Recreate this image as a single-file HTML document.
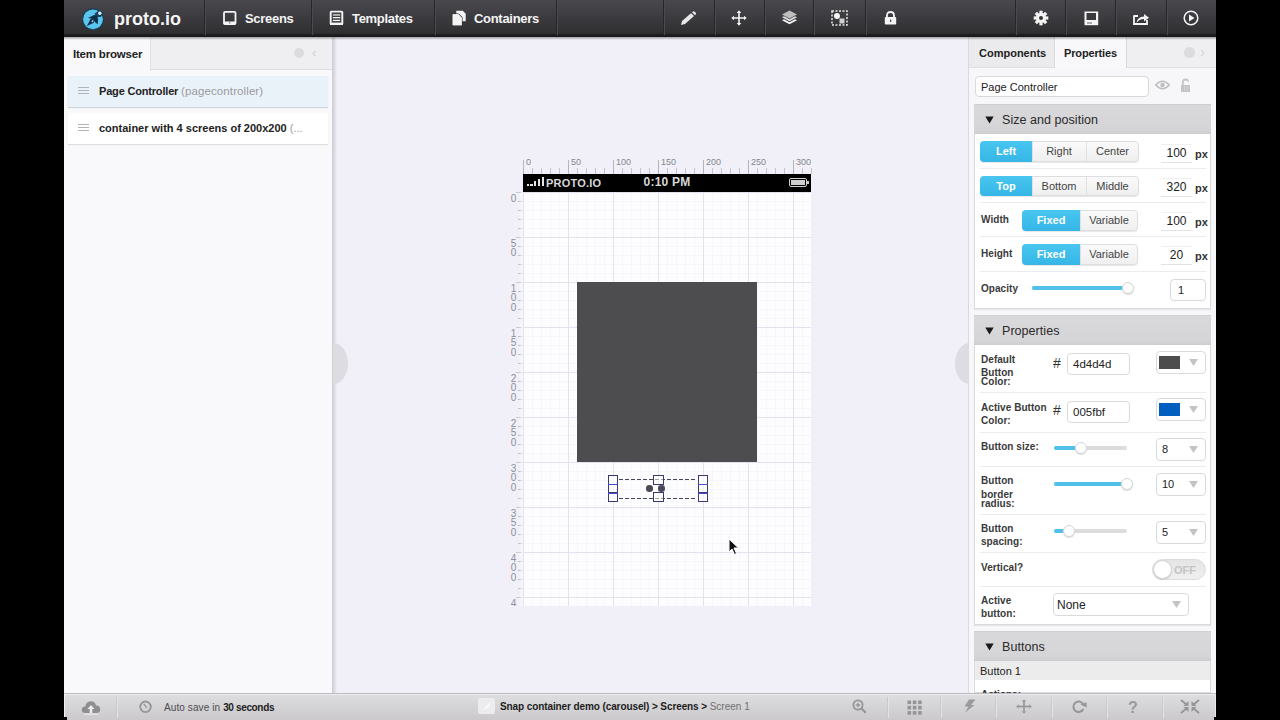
<!DOCTYPE html>
<html><head><meta charset="utf-8">
<style>
*{margin:0;padding:0;box-sizing:border-box}
html,body{width:1280px;height:720px;overflow:hidden;background:#000;font-family:"Liberation Sans",sans-serif}
.a{position:absolute}
#top{left:64px;top:0;width:1152px;height:37px;background:linear-gradient(#48484d,#3c3c40 45%,#2f2f32 90%,#1c1c1e 94%,#1a1a1c);z-index:5}
#shadow{left:64px;top:37px;width:1152px;height:3px;background:linear-gradient(rgba(40,40,45,0.4),rgba(40,40,45,0));z-index:5}
.dv{position:absolute;top:0;width:1px;height:35px;background:#27272a;box-shadow:1px 0 0 #4a4a4f}
.nt{position:absolute;top:10.5px;color:#f4f4f4;font-size:13px;line-height:16px;font-weight:bold;letter-spacing:-0.3px;white-space:nowrap}
#left{left:64px;top:36px;width:269px;height:657px;background:#f9f9fb}
#canvas{left:333px;top:36px;width:636px;height:657px;background:#f1f0f8;overflow:hidden}
#right{left:969px;top:36px;width:247px;height:657px;background:#f6f6f7}
#bottom{left:64px;top:693px;width:1152px;height:27px;background:linear-gradient(#dddddd,#cdcdcd);border-top:1px solid #c6c6c6}
.bd{position:absolute;top:4px;width:1px;height:20px;background:#c0c0c0;box-shadow:1px 0 0 #e4e4e4}
.t{position:absolute;white-space:nowrap}
</style></head><body>

<!-- top bar -->
<div id="top" class="a">
  <svg class="a" style="left:17px;top:7px" width="24" height="24" viewBox="0 0 24 24">
    <circle cx="12" cy="12.3" r="11" fill="#1a3d55"/>
    <circle cx="12" cy="12.3" r="9.9" fill="#5ac6f0"/>
    <path d="M7 11 L13 8 L19 8.5 L14 12.2 Z" fill="#0f2f4a"/>
    <path d="M5.8 19.2 L9.3 12.5 L13.5 9.3 L16.8 10.5 L12.6 15.8 Z" fill="#0f2f4a"/>
    <path d="M14 12 L17.2 11 L16.6 17.2 L14 15.2 Z" fill="#0f2f4a"/>
    <path d="M13.5 6.8 L18 3.2 L23 5.8 L19.5 10.2 L15 9.2 Z" fill="#1a3f5c"/>
    <circle cx="18.8" cy="6.2" r="1.7" fill="#d8eef8"/>
    <path d="M10.3 14.8 L12.3 12.3 L12.2 15.2 Z" fill="#a8dcef"/>
  </svg>
  <div class="nt" style="left:50px;top:7.5px;font-size:18px;line-height:22px;letter-spacing:0">proto.io</div>
  <div class="dv" style="left:140px"></div>
  <!-- screens icon -->
  <svg class="a" style="left:159px;top:11px" width="14" height="14" viewBox="0 0 14 14">
    <rect x="1" y="0.9" width="11.5" height="12.2" rx="1.2" fill="none" stroke="#f4f4f4" stroke-width="1.8"/>
    <rect x="0.5" y="10.6" width="12.5" height="3" rx="1" fill="#f4f4f4"/>
    <circle cx="6.75" cy="11.9" r="0.7" fill="#555"/>
  </svg>
  <div class="nt" style="left:181px">Screens</div>
  <div class="dv" style="left:247px"></div>
  <!-- templates icon -->
  <svg class="a" style="left:265px;top:10px" width="15" height="16" viewBox="0 0 15 16">
    <rect x="1.7" y="1.6" width="11.6" height="12.4" rx="0.6" fill="none" stroke="#f4f4f4" stroke-width="1.9"/>
    <rect x="1" y="12.6" width="13" height="2.4" fill="#f4f4f4"/>
    <rect x="3.8" y="4.3" width="7.4" height="1.3" fill="#e8e8e8"/>
    <rect x="3.8" y="7" width="7.4" height="1.3" fill="#f4f4f4"/>
    <rect x="3.8" y="9.8" width="7.4" height="1.3" fill="#f4f4f4"/>
  </svg>
  <div class="nt" style="left:288px">Templates</div>
  <div class="dv" style="left:370px"></div>
  <!-- containers icon -->
  <svg class="a" style="left:387px;top:10px" width="17" height="17" viewBox="0 0 17 17">
    <path d="M5.3 0.8 H11.8 L14.7 3.7 V11.3 H5.3 Z" fill="#f4f4f4"/>
    <path d="M1.7 4.3 H7.3 L10.7 7.7 V15.3 H1.7 Z" fill="#f4f4f4" stroke="#2e2e31" stroke-width="1.6" paint-order="stroke"/>
    <path d="M1.7 4.3 H7.3 L10.7 7.7 V15.3 H1.7 Z" fill="#f4f4f4"/>
  </svg>
  <div class="nt" style="left:410px">Containers</div>
  <div class="dv" style="left:492px"></div>
  <div class="dv" style="left:599px"></div>
  <!-- pencil -->
  <svg class="a" style="left:616px;top:11px" width="17" height="15" viewBox="0 0 17 15">
    <path d="M1 14 L2 10 L11 2.2 L14 5 L5 13 Z" fill="#e8e8e8"/>
    <path d="M12 1.3 L13 0.5 Q14 0 15 1 L15.7 1.7 Q16.5 2.7 15.7 3.5 L15 4.2 Z" fill="#e8e8e8"/>
  </svg>
  <div class="dv" style="left:650px"></div>
  <!-- move -->
  <svg class="a" style="left:667px;top:10px" width="16" height="16" viewBox="0 0 16 16">
    <path d="M7.2 2.5 H8.8 V7.2 H13.5 V8.8 H8.8 V13.5 H7.2 V8.8 H2.5 V7.2 H7.2 Z" fill="#f4f4f4"/>
    <path d="M8 0.3 L10.3 3 H5.7 Z M8 15.7 L10.3 13 H5.7 Z M0.3 8 L3 5.7 V10.3 Z M15.7 8 L13 5.7 V10.3 Z" fill="#f4f4f4"/>
  </svg>
  <div class="dv" style="left:700px"></div>
  <!-- layers -->
  <svg class="a" style="left:717px;top:10px" width="17" height="15" viewBox="0 0 17 15">
    <path d="M8.5 0.5 L16 4.5 L8.5 8.5 L1 4.5 Z" fill="#bdbdbd"/>
    <path d="M1 7.3 L3 6.3 L8.5 9.3 L14 6.3 L16 7.3 L8.5 11.3 Z" fill="#e0e0e0"/>
    <path d="M1 10.3 L3 9.3 L8.5 12.3 L14 9.3 L16 10.3 L8.5 14.3 Z" fill="#f4f4f4"/>
  </svg>
  <div class="dv" style="left:749px"></div>
  <!-- select -->
  <svg class="a" style="left:767px;top:10px" width="17" height="16" viewBox="0 0 17 16">
    <rect x="1" y="1" width="15" height="14" fill="none" stroke="#e6e6e6" stroke-width="1.5" stroke-dasharray="2 1.5"/>
    <circle cx="6" cy="6" r="3" fill="#f4f4f4"/>
    <rect x="8.5" y="8.5" width="5" height="5" fill="#cfcfcf"/>
  </svg>
  <div class="dv" style="left:801px"></div>
  <!-- lock -->
  <svg class="a" style="left:820px;top:11px" width="13" height="14" viewBox="0 0 13 14">
    <path d="M3 6 V4.5 Q3 1 6.5 1 Q10 1 10 4.5 V6" fill="none" stroke="#f4f4f4" stroke-width="1.8"/>
    <rect x="0.8" y="6" width="11.4" height="7.5" rx="0.8" fill="#f4f4f4"/>
    <rect x="6" y="8.5" width="1.2" height="2.5" fill="#444"/>
  </svg>
  <div class="dv" style="left:951px"></div>
  <!-- gear -->
  <svg class="a" style="left:969px;top:10px" width="16" height="16" viewBox="0 0 16 16">
    <g fill="#f4f4f4" transform="translate(8 8)">
      <circle r="5"/>
      <rect x="-1.6" y="-7.3" width="3.2" height="14.6"/>
      <rect x="-1.6" y="-7.3" width="3.2" height="14.6" transform="rotate(45)"/>
      <rect x="-1.6" y="-7.3" width="3.2" height="14.6" transform="rotate(90)"/>
      <rect x="-1.6" y="-7.3" width="3.2" height="14.6" transform="rotate(135)"/>
      <circle r="2" fill="#333"/>
    </g>
  </svg>
  <div class="dv" style="left:1001px"></div>
  <!-- save -->
  <svg class="a" style="left:1020px;top:11px" width="15" height="15" viewBox="0 0 15 15">
    <path d="M0.5 0.5 H14.2 V14.2 H0.5 Z" fill="#f4f4f4"/>
    <rect x="2.5" y="2" width="9.5" height="7" fill="#3a3a3d"/>
    <rect x="3" y="11" width="5" height="2" fill="#aaa"/>
  </svg>
  <div class="dv" style="left:1051px"></div>
  <!-- share -->
  <svg class="a" style="left:1069px;top:11px" width="17" height="14" viewBox="0 0 17 14">
    <path d="M1 5 H5 M1 4.2 V13 H14 V9" fill="none" stroke="#f4f4f4" stroke-width="1.8"/>
    <path d="M3.5 12 Q4 6 11 5.5 V3 L16 6.8 L11 10.5 V8 Q6 8 3.5 12 Z" fill="#f4f4f4"/>
  </svg>
  <div class="dv" style="left:1102px"></div>
  <!-- play -->
  <svg class="a" style="left:1119px;top:10px" width="16" height="16" viewBox="0 0 16 16">
    <circle cx="8" cy="8" r="6.8" fill="none" stroke="#f4f4f4" stroke-width="1.5"/>
    <path d="M6 4.5 L11.5 8 L6 11.5 Z" fill="#f4f4f4"/>
  </svg>
</div>

<div id="shadow" class="a"></div>
<!-- left panel -->
<div id="left" class="a">
  <div class="a" style="left:0;top:0;width:269px;height:34px;background:#efeef0;border-bottom:1px solid #dcdcde"></div>
  <div class="a" style="left:0;top:0;width:87px;height:35px;background:#f8f8fa;border-right:1px solid #e2e2e4"></div>
  
  <div class="t" style="left:9px;top:11px;font-size:11.5px;line-height:14px;font-weight:bold;color:#222;letter-spacing:-0.2px">Item browser</div>
  <div class="a" style="left:230px;top:12px;width:10px;height:10px;border-radius:50%;background:#dcdcde"></div>
  <div class="t" style="left:248px;top:9px;font-size:13px;color:#d0d0d2">&lsaquo;</div>

  <div class="a" style="left:4px;top:40px;width:260px;height:31px;background:#eaf2f9;box-shadow:0 1px 1px #d0d5db"></div>
  <div class="a" style="left:14px;top:50.5px;width:11px;height:1.8px;background:#b4b4b8;box-shadow:0 3px 0 #b4b4b8,0 6px 0 #b4b4b8"></div>
  <div class="t" style="left:35px;top:49px;font-size:11px;line-height:13px;font-weight:bold;color:#222;letter-spacing:-0.18px">Page Controller <span style="font-weight:normal;color:#9a9a9e;font-size:11.5px;letter-spacing:0.1px">(pagecontroller)</span></div>

  <div class="a" style="left:4px;top:77px;width:260px;height:31px;background:#fff;box-shadow:0 1px 1px #dedede"></div>
  <div class="a" style="left:14px;top:87.5px;width:11px;height:1.8px;background:#b4b4b8;box-shadow:0 3px 0 #b4b4b8,0 6px 0 #b4b4b8"></div>
  <div class="t" style="left:35px;top:86px;font-size:11px;font-weight:bold;color:#222">container with 4 screens of 200x200 <span style="font-weight:normal;color:#9a9a9e">(...</span></div>
  <div class="a" style="left:268px;top:0;width:1px;height:657px;background:#cfcfd4"></div>
</div>

<div id="canvas" class="a">
<div class="a" style="left:190px;top:156px;width:288px;height:414px;background:#fdfdff;background-image:linear-gradient(90deg,#e3e3ef 1px,transparent 1px),linear-gradient(#e3e3ef 1px,transparent 1px),linear-gradient(90deg,#f7f7fa 1px,transparent 1px),linear-gradient(#f7f7fa 1px,transparent 1px);background-size:45px 45px,45px 45px,9px 9px,9px 9px;background-position:0 0,0 0,0 0,0 0"></div>
<div class="a" style="left:190px;top:138px;width:288px;height:18px;background:#000"></div>
<div class="a" style="left:193.7px;top:148.2px;width:2.3px;height:1.8px;background:#e4e4e4"></div>
<div class="a" style="left:197.4px;top:147.5px;width:2.3px;height:2.5px;background:#e4e4e4"></div>
<div class="a" style="left:201.1px;top:145.3px;width:2.3px;height:4.7px;background:#e4e4e4"></div>
<div class="a" style="left:204.8px;top:143.2px;width:2.3px;height:6.8px;background:#e4e4e4"></div>
<div class="a" style="left:208.5px;top:141.1px;width:2.3px;height:8.9px;background:#e4e4e4"></div>
<div class="t" style="left:213px;top:139.5px;font-size:11px;line-height:14px;color:#d8d8d8;font-weight:bold;letter-spacing:0.2px">PROTO.IO</div>
<div class="t" style="left:310.5px;top:139px;font-size:12px;line-height:14px;color:#d8d8d8;font-weight:bold;letter-spacing:0.25px">0:10 PM</div>
<div class="a" style="left:456px;top:142px;width:18px;height:9px;border:1.2px solid #cfcfcf;border-radius:2px"></div>
<div class="a" style="left:458px;top:144px;width:14px;height:5px;background:#cfcfcf"></div>
<div class="a" style="left:474px;top:145px;width:2px;height:3px;background:#cfcfcf"></div>
<div class="a" style="left:190px;top:124px;width:1px;height:14px;background:#b4b4be"></div>
<div class="a" style="left:199px;top:132px;width:1px;height:6px;background:#c4c4cc"></div>
<div class="a" style="left:208px;top:132px;width:1px;height:6px;background:#c4c4cc"></div>
<div class="a" style="left:217px;top:132px;width:1px;height:6px;background:#c4c4cc"></div>
<div class="a" style="left:226px;top:132px;width:1px;height:6px;background:#c4c4cc"></div>
<div class="a" style="left:235px;top:124px;width:1px;height:14px;background:#b4b4be"></div>
<div class="a" style="left:244px;top:132px;width:1px;height:6px;background:#c4c4cc"></div>
<div class="a" style="left:253px;top:132px;width:1px;height:6px;background:#c4c4cc"></div>
<div class="a" style="left:262px;top:132px;width:1px;height:6px;background:#c4c4cc"></div>
<div class="a" style="left:271px;top:132px;width:1px;height:6px;background:#c4c4cc"></div>
<div class="a" style="left:280px;top:124px;width:1px;height:14px;background:#b4b4be"></div>
<div class="a" style="left:289px;top:132px;width:1px;height:6px;background:#c4c4cc"></div>
<div class="a" style="left:298px;top:132px;width:1px;height:6px;background:#c4c4cc"></div>
<div class="a" style="left:307px;top:132px;width:1px;height:6px;background:#c4c4cc"></div>
<div class="a" style="left:316px;top:132px;width:1px;height:6px;background:#c4c4cc"></div>
<div class="a" style="left:325px;top:124px;width:1px;height:14px;background:#b4b4be"></div>
<div class="a" style="left:334px;top:132px;width:1px;height:6px;background:#c4c4cc"></div>
<div class="a" style="left:343px;top:132px;width:1px;height:6px;background:#c4c4cc"></div>
<div class="a" style="left:352px;top:132px;width:1px;height:6px;background:#c4c4cc"></div>
<div class="a" style="left:361px;top:132px;width:1px;height:6px;background:#c4c4cc"></div>
<div class="a" style="left:370px;top:124px;width:1px;height:14px;background:#b4b4be"></div>
<div class="a" style="left:379px;top:132px;width:1px;height:6px;background:#c4c4cc"></div>
<div class="a" style="left:388px;top:132px;width:1px;height:6px;background:#c4c4cc"></div>
<div class="a" style="left:397px;top:132px;width:1px;height:6px;background:#c4c4cc"></div>
<div class="a" style="left:406px;top:132px;width:1px;height:6px;background:#c4c4cc"></div>
<div class="a" style="left:415px;top:124px;width:1px;height:14px;background:#b4b4be"></div>
<div class="a" style="left:424px;top:132px;width:1px;height:6px;background:#c4c4cc"></div>
<div class="a" style="left:433px;top:132px;width:1px;height:6px;background:#c4c4cc"></div>
<div class="a" style="left:442px;top:132px;width:1px;height:6px;background:#c4c4cc"></div>
<div class="a" style="left:451px;top:132px;width:1px;height:6px;background:#c4c4cc"></div>
<div class="a" style="left:460px;top:124px;width:1px;height:14px;background:#b4b4be"></div>
<div class="a" style="left:469px;top:132px;width:1px;height:6px;background:#c4c4cc"></div>
<div class="a" style="left:478px;top:132px;width:1px;height:6px;background:#c4c4cc"></div>
<div class="t" style="left:193px;top:121px;font-size:9px;line-height:10px;color:#85858d">0</div>
<div class="t" style="left:238px;top:121px;font-size:9px;line-height:10px;color:#85858d">50</div>
<div class="t" style="left:283px;top:121px;font-size:9px;line-height:10px;color:#85858d">100</div>
<div class="t" style="left:328px;top:121px;font-size:9px;line-height:10px;color:#85858d">150</div>
<div class="t" style="left:373px;top:121px;font-size:9px;line-height:10px;color:#85858d">200</div>
<div class="t" style="left:418px;top:121px;font-size:9px;line-height:10px;color:#85858d">250</div>
<div class="t" style="left:463px;top:121px;font-size:9px;line-height:10px;color:#85858d">300</div>
<div class="a" style="left:170px;top:156px;width:20px;height:414px;overflow:hidden"><div class="a" style="left:13px;top:0px;width:7px;height:1px;background:#c8c8d0"></div><div class="a" style="left:15px;top:9px;width:5px;height:1px;background:#bcbcc6"></div><div class="a" style="left:15px;top:18px;width:5px;height:1px;background:#bcbcc6"></div><div class="a" style="left:15px;top:27px;width:5px;height:1px;background:#bcbcc6"></div><div class="a" style="left:15px;top:36px;width:5px;height:1px;background:#bcbcc6"></div><div class="a" style="left:13px;top:45px;width:7px;height:1px;background:#c8c8d0"></div><div class="a" style="left:15px;top:54px;width:5px;height:1px;background:#bcbcc6"></div><div class="a" style="left:15px;top:63px;width:5px;height:1px;background:#bcbcc6"></div><div class="a" style="left:15px;top:72px;width:5px;height:1px;background:#bcbcc6"></div><div class="a" style="left:15px;top:81px;width:5px;height:1px;background:#bcbcc6"></div><div class="a" style="left:13px;top:90px;width:7px;height:1px;background:#c8c8d0"></div><div class="a" style="left:15px;top:99px;width:5px;height:1px;background:#bcbcc6"></div><div class="a" style="left:15px;top:108px;width:5px;height:1px;background:#bcbcc6"></div><div class="a" style="left:15px;top:117px;width:5px;height:1px;background:#bcbcc6"></div><div class="a" style="left:15px;top:126px;width:5px;height:1px;background:#bcbcc6"></div><div class="a" style="left:13px;top:135px;width:7px;height:1px;background:#c8c8d0"></div><div class="a" style="left:15px;top:144px;width:5px;height:1px;background:#bcbcc6"></div><div class="a" style="left:15px;top:153px;width:5px;height:1px;background:#bcbcc6"></div><div class="a" style="left:15px;top:162px;width:5px;height:1px;background:#bcbcc6"></div><div class="a" style="left:15px;top:171px;width:5px;height:1px;background:#bcbcc6"></div><div class="a" style="left:13px;top:180px;width:7px;height:1px;background:#c8c8d0"></div><div class="a" style="left:15px;top:189px;width:5px;height:1px;background:#bcbcc6"></div><div class="a" style="left:15px;top:198px;width:5px;height:1px;background:#bcbcc6"></div><div class="a" style="left:15px;top:207px;width:5px;height:1px;background:#bcbcc6"></div><div class="a" style="left:15px;top:216px;width:5px;height:1px;background:#bcbcc6"></div><div class="a" style="left:13px;top:225px;width:7px;height:1px;background:#c8c8d0"></div><div class="a" style="left:15px;top:234px;width:5px;height:1px;background:#bcbcc6"></div><div class="a" style="left:15px;top:243px;width:5px;height:1px;background:#bcbcc6"></div><div class="a" style="left:15px;top:252px;width:5px;height:1px;background:#bcbcc6"></div><div class="a" style="left:15px;top:261px;width:5px;height:1px;background:#bcbcc6"></div><div class="a" style="left:13px;top:270px;width:7px;height:1px;background:#c8c8d0"></div><div class="a" style="left:15px;top:279px;width:5px;height:1px;background:#bcbcc6"></div><div class="a" style="left:15px;top:288px;width:5px;height:1px;background:#bcbcc6"></div><div class="a" style="left:15px;top:297px;width:5px;height:1px;background:#bcbcc6"></div><div class="a" style="left:15px;top:306px;width:5px;height:1px;background:#bcbcc6"></div><div class="a" style="left:13px;top:315px;width:7px;height:1px;background:#c8c8d0"></div><div class="a" style="left:15px;top:324px;width:5px;height:1px;background:#bcbcc6"></div><div class="a" style="left:15px;top:333px;width:5px;height:1px;background:#bcbcc6"></div><div class="a" style="left:15px;top:342px;width:5px;height:1px;background:#bcbcc6"></div><div class="a" style="left:15px;top:351px;width:5px;height:1px;background:#bcbcc6"></div><div class="a" style="left:13px;top:360px;width:7px;height:1px;background:#c8c8d0"></div><div class="a" style="left:15px;top:369px;width:5px;height:1px;background:#bcbcc6"></div><div class="a" style="left:15px;top:378px;width:5px;height:1px;background:#bcbcc6"></div><div class="a" style="left:15px;top:387px;width:5px;height:1px;background:#bcbcc6"></div><div class="a" style="left:15px;top:396px;width:5px;height:1px;background:#bcbcc6"></div><div class="a" style="left:13px;top:405px;width:7px;height:1px;background:#c8c8d0"></div><div class="a" style="left:15px;top:414px;width:5px;height:1px;background:#bcbcc6"></div><div class="t" style="left:6px;top:2px;font-size:10px;line-height:9.3px;color:#8e8e96;text-align:center;width:9px;white-space:normal">0</div><div class="t" style="left:6px;top:47px;font-size:10px;line-height:9.3px;color:#8e8e96;text-align:center;width:9px;white-space:normal">5<br>0</div><div class="t" style="left:6px;top:92px;font-size:10px;line-height:9.3px;color:#8e8e96;text-align:center;width:9px;white-space:normal">1<br>0<br>0</div><div class="t" style="left:6px;top:137px;font-size:10px;line-height:9.3px;color:#8e8e96;text-align:center;width:9px;white-space:normal">1<br>5<br>0</div><div class="t" style="left:6px;top:182px;font-size:10px;line-height:9.3px;color:#8e8e96;text-align:center;width:9px;white-space:normal">2<br>0<br>0</div><div class="t" style="left:6px;top:227px;font-size:10px;line-height:9.3px;color:#8e8e96;text-align:center;width:9px;white-space:normal">2<br>5<br>0</div><div class="t" style="left:6px;top:272px;font-size:10px;line-height:9.3px;color:#8e8e96;text-align:center;width:9px;white-space:normal">3<br>0<br>0</div><div class="t" style="left:6px;top:317px;font-size:10px;line-height:9.3px;color:#8e8e96;text-align:center;width:9px;white-space:normal">3<br>5<br>0</div><div class="t" style="left:6px;top:362px;font-size:10px;line-height:9.3px;color:#8e8e96;text-align:center;width:9px;white-space:normal">4<br>0<br>0</div><div class="t" style="left:6px;top:407px;font-size:10px;line-height:9.3px;color:#8e8e96;text-align:center;width:9px;white-space:normal">4<br>5<br>0</div><div class="a" style="left:16px;top:0;width:4px;height:414px;background:linear-gradient(90deg,rgba(255,255,255,0),rgba(250,250,253,0.9))"></div></div>
<div class="a" style="left:244px;top:246px;width:180px;height:180px;background:#4d4c4e"></div>
<div class="a" style="left:286px;top:443px;width:78px;height:1.2px;background:repeating-linear-gradient(90deg,#45455a 0 4px,transparent 4px 6px)"></div>
<div class="a" style="left:286px;top:462px;width:78px;height:1.2px;background:repeating-linear-gradient(90deg,#45455a 0 4px,transparent 4px 6px)"></div>
<div class="a" style="left:275.29999999999995px;top:439px;width:10px;height:9.5px;border:1.1px solid #3a3a72;background:rgba(255,255,255,0.5)"></div>
<div class="a" style="left:275.29999999999995px;top:447.8px;width:10px;height:9.3px;border:1.1px solid #3a3a72;background:rgba(255,255,255,0.5)"></div>
<div class="a" style="left:275.29999999999995px;top:456.3px;width:10px;height:9.3px;border:1.1px solid #3a3a72;background:rgba(255,255,255,0.5)"></div>
<div class="a" style="left:275.29999999999995px;top:448px;width:10px;height:1px;background:#4a4ad0"></div>
<div class="a" style="left:275.29999999999995px;top:456.5px;width:10px;height:1px;background:#4a4ad0"></div>
<div class="a" style="left:364.5px;top:439px;width:10px;height:9.5px;border:1.1px solid #3a3a72;background:rgba(255,255,255,0.5)"></div>
<div class="a" style="left:364.5px;top:447.8px;width:10px;height:9.3px;border:1.1px solid #3a3a72;background:rgba(255,255,255,0.5)"></div>
<div class="a" style="left:364.5px;top:456.3px;width:10px;height:9.3px;border:1.1px solid #3a3a72;background:rgba(255,255,255,0.5)"></div>
<div class="a" style="left:364.5px;top:448px;width:10px;height:1px;background:#4a4ad0"></div>
<div class="a" style="left:364.5px;top:456.5px;width:10px;height:1px;background:#4a4ad0"></div>
<div class="a" style="left:313.4px;top:449.2px;width:6.6px;height:6.6px;border-radius:50%;background:#4a4a50"></div>
<div class="a" style="left:325px;top:449.2px;width:6.6px;height:6.6px;border-radius:50%;background:#4a4a5a"></div>
<div class="a" style="left:320.4px;top:439px;width:11px;height:10.2px;border:1.1px solid #3a3a72;background:rgba(255,255,255,0.5)"></div>
<div class="a" style="left:320.4px;top:455.7px;width:11px;height:9.9px;border:1.1px solid #3a3a72;background:rgba(255,255,255,0.5)"></div>
<svg class="a" style="left:395px;top:502px" width="12" height="18" viewBox="0 0 12 18"><path d="M1 1 L1 14 L4 11 L6.5 16.5 L8.5 15.5 L6 10 L10.5 10 Z" fill="#111" stroke="#fff" stroke-width="1"/></svg>
<div class="a" style="left:0;top:0;width:4px;height:657px;background:linear-gradient(90deg,rgba(150,150,160,0.35),rgba(150,150,160,0))"></div>
<div class="a" style="left:-14px;top:307px;width:29px;height:41px;border-radius:50%;background:#dcdce2"></div>
<div class="a" style="left:622px;top:307px;width:29px;height:41px;border-radius:50%;background:#dcdce2"></div>
</div>
<div id="rightp">
<div class="a" style="left:969px;top:36px;width:247px;height:657px;background:#f7f7f9"></div>
<div class="a" style="left:968px;top:36px;width:1px;height:657px;background:#d9d9de"></div>
<div class="a" style="left:969px;top:36px;width:247px;height:32px;background:#efeff1;border-bottom:1px solid #dedee0"></div>
<div class="a" style="left:969px;top:36px;width:86px;height:32px;background:#ebebed;border-right:1px solid #dadadc;border-bottom:1px solid #dedee0"></div>
<div class="a" style="left:1055px;top:36px;width:72px;height:32px;background:#f8f8fa;border-right:1px solid #dadadc"></div>
<div class="t" style="left:979px;top:46px;font-size:11px;line-height:14px;font-weight:bold;color:#222">Components</div>
<div class="t" style="left:1064px;top:46px;font-size:11px;line-height:14px;font-weight:bold;color:#222;letter-spacing:-0.15px">Properties</div>
<div class="a" style="left:1184px;top:47px;width:11px;height:11px;border-radius:50%;background:#dcdcde"></div>
<div class="t" style="left:1200px;top:43px;font-size:15px;line-height:18px;color:#d4d4d6">&rsaquo;</div>
<div class="a" style="left:975px;top:76px;width:174px;height:21px;background:#fff;border:1px solid #d9d9db;border-radius:4px"></div>
<div class="t" style="left:981px;top:80px;font-size:11px;line-height:14px;color:#222">Page Controller</div>
<svg class="a" style="left:1155px;top:80px" width="15" height="10" viewBox="0 0 15 10"><path d="M0.8 5 Q7.5 -2.5 14.2 5 Q7.5 12.5 0.8 5 Z" fill="none" stroke="#bdbdbf" stroke-width="1.6"/><circle cx="7.5" cy="5" r="2.2" fill="#bdbdbf"/></svg>
<svg class="a" style="left:1180px;top:78px" width="11" height="15" viewBox="0 0 11 15"><path d="M2.8 7 V4 Q2.8 1.5 5.5 1.5 Q8 1.5 8 3.5" fill="none" stroke="#c4c4c6" stroke-width="1.8"/><rect x="1" y="7" width="9" height="7" rx="0.6" fill="#c4c4c6"/><rect x="4" y="8" width="0.8" height="5" fill="#dadadc"/><rect x="6.6" y="8" width="0.8" height="5" fill="#dadadc"/></svg>
<div class="a" style="left:974px;top:104px;width:237px;height:30px;background:linear-gradient(#d9d8da,#d5d4d6 85%,#cdcccf);border-top:1px solid #d0d0d2"></div>
<svg class="a" style="left:985px;top:116px" width="9" height="8" viewBox="0 0 9 8"><path d="M0.3 0.5 H8.7 L4.5 7.5 Z" fill="#1a1a1a"/></svg>
<div class="t" style="left:1002px;top:113.3px;font-size:12.5px;line-height:15px;color:#2a2a2a;letter-spacing:0.05px">Size and position</div>
<div class="a" style="left:974px;top:134px;width:237px;height:175px;background:#fff;border:1px solid #dcdcde;border-top:none;box-shadow:0 1px 1px #e4e4e6"></div>
<div class="a" style="left:980px;top:141px;width:159px;height:21px;background:linear-gradient(#fafafa,#efefef);border:1px solid #dedede;border-radius:4px;box-shadow:0 1px 1px #e6e6e6"></div>
<div class="a" style="left:980px;top:141px;width:52px;height:21px;background:linear-gradient(#49c6f0,#35b6e6);border-radius:4px 0 0 4px"></div>
<div class="t" style="left:980px;top:141px;width:52px;height:21px;line-height:21px;text-align:center;font-size:11px;font-weight:bold;color:#fff">Left</div>
<div class="a" style="left:1032px;top:142px;width:1px;height:19px;background:#e0e0e0"></div>
<div class="t" style="left:1032px;top:141px;width:54px;height:21px;line-height:21px;text-align:center;font-size:11px;color:#444">Right</div>
<div class="a" style="left:1086px;top:142px;width:1px;height:19px;background:#e0e0e0"></div>
<div class="t" style="left:1086px;top:141px;width:53px;height:21px;line-height:21px;text-align:center;font-size:11px;color:#444">Center</div>
<div class="a" style="left:1161px;top:144px;width:31px;height:19px;background:#fff;border-top:1px solid #f0f0f0;border-bottom:1px solid #e2e2e2"></div>
<div class="t" style="left:1161px;top:146px;width:31px;text-align:center;font-size:12px;line-height:14px;color:#222">100</div>
<div class="t" style="left:1195px;top:146.5px;font-size:11px;line-height:14px;font-weight:bold;color:#333">px</div>
<div class="a" style="left:980px;top:168px;width:226px;height:1px;background:#ececee"></div>
<div class="a" style="left:980px;top:176px;width:159px;height:20px;background:linear-gradient(#fafafa,#efefef);border:1px solid #dedede;border-radius:4px;box-shadow:0 1px 1px #e6e6e6"></div>
<div class="a" style="left:980px;top:176px;width:52px;height:20px;background:linear-gradient(#49c6f0,#35b6e6);border-radius:4px 0 0 4px"></div>
<div class="t" style="left:980px;top:176px;width:52px;height:20px;line-height:20px;text-align:center;font-size:11px;font-weight:bold;color:#fff">Top</div>
<div class="a" style="left:1032px;top:177px;width:1px;height:18px;background:#e0e0e0"></div>
<div class="t" style="left:1032px;top:176px;width:54px;height:20px;line-height:20px;text-align:center;font-size:11px;color:#444">Bottom</div>
<div class="a" style="left:1086px;top:177px;width:1px;height:18px;background:#e0e0e0"></div>
<div class="t" style="left:1086px;top:176px;width:53px;height:20px;line-height:20px;text-align:center;font-size:11px;color:#444">Middle</div>
<div class="a" style="left:1161px;top:178px;width:31px;height:19px;background:#fff;border-top:1px solid #f0f0f0;border-bottom:1px solid #e2e2e2"></div>
<div class="t" style="left:1161px;top:180px;width:31px;text-align:center;font-size:12px;line-height:14px;color:#222">320</div>
<div class="t" style="left:1195px;top:180.5px;font-size:11px;line-height:14px;font-weight:bold;color:#333">px</div>
<div class="a" style="left:980px;top:202px;width:226px;height:1px;background:#ececee"></div>
<div class="t" style="left:981px;top:213px;font-size:10px;line-height:13px;font-weight:bold;color:#3a3a3a;letter-spacing:0.05px">Width</div>
<div class="a" style="left:1022px;top:210px;width:116px;height:21px;background:linear-gradient(#fafafa,#efefef);border:1px solid #dedede;border-radius:4px;box-shadow:0 1px 1px #e6e6e6"></div>
<div class="a" style="left:1022px;top:210px;width:58px;height:21px;background:linear-gradient(#49c6f0,#35b6e6);border-radius:4px 0 0 4px"></div>
<div class="t" style="left:1022px;top:210px;width:58px;height:21px;line-height:21px;text-align:center;font-size:11px;font-weight:bold;color:#fff">Fixed</div>
<div class="a" style="left:1080px;top:211px;width:1px;height:19px;background:#e0e0e0"></div>
<div class="t" style="left:1080px;top:210px;width:58px;height:21px;line-height:21px;text-align:center;font-size:11px;color:#444">Variable</div>
<div class="a" style="left:1161px;top:212px;width:31px;height:19px;background:#fff;border-top:1px solid #f0f0f0;border-bottom:1px solid #e2e2e2"></div>
<div class="t" style="left:1161px;top:214px;width:31px;text-align:center;font-size:12px;line-height:14px;color:#222">100</div>
<div class="t" style="left:1195px;top:214.5px;font-size:11px;line-height:14px;font-weight:bold;color:#333">px</div>
<div class="a" style="left:980px;top:236px;width:226px;height:1px;background:#ececee"></div>
<div class="t" style="left:981px;top:247px;font-size:10px;line-height:13px;font-weight:bold;color:#3a3a3a;letter-spacing:0.05px">Height</div>
<div class="a" style="left:1022px;top:244px;width:116px;height:21px;background:linear-gradient(#fafafa,#efefef);border:1px solid #dedede;border-radius:4px;box-shadow:0 1px 1px #e6e6e6"></div>
<div class="a" style="left:1022px;top:244px;width:58px;height:21px;background:linear-gradient(#49c6f0,#35b6e6);border-radius:4px 0 0 4px"></div>
<div class="t" style="left:1022px;top:244px;width:58px;height:21px;line-height:21px;text-align:center;font-size:11px;font-weight:bold;color:#fff">Fixed</div>
<div class="a" style="left:1080px;top:245px;width:1px;height:19px;background:#e0e0e0"></div>
<div class="t" style="left:1080px;top:244px;width:58px;height:21px;line-height:21px;text-align:center;font-size:11px;color:#444">Variable</div>
<div class="a" style="left:1161px;top:246px;width:31px;height:19px;background:#fff;border-top:1px solid #f0f0f0;border-bottom:1px solid #e2e2e2"></div>
<div class="t" style="left:1161px;top:248px;width:31px;text-align:center;font-size:12px;line-height:14px;color:#222">20</div>
<div class="t" style="left:1195px;top:248.5px;font-size:11px;line-height:14px;font-weight:bold;color:#333">px</div>
<div class="a" style="left:980px;top:271px;width:226px;height:1px;background:#ececee"></div>
<div class="t" style="left:981px;top:282px;font-size:10px;line-height:13px;font-weight:bold;color:#3a3a3a;letter-spacing:0.05px">Opacity</div>
<div class="a" style="left:1032px;top:286px;width:101px;height:4px;background:#dcdcdc;border-radius:2px"></div>
<div class="a" style="left:1032px;top:286px;width:96px;height:4px;background:#4fc0ea;border-radius:2px"></div>
<div class="a" style="left:1122px;top:282px;width:12px;height:12px;background:#fff;border:1px solid #d4d4d4;border-radius:50%;box-shadow:0 1px 1px #ddd"></div>
<div class="a" style="left:1170px;top:279px;width:36px;height:22px;background:#fff;border:1px solid #dadada;border-radius:4px"></div>
<div class="t" style="left:1178px;top:284px;font-size:11px;line-height:13px;color:#222">1</div>
<div class="a" style="left:974px;top:315px;width:237px;height:30px;background:linear-gradient(#d9d8da,#d5d4d6 85%,#cdcccf);border-top:1px solid #d0d0d2"></div>
<svg class="a" style="left:985px;top:327px" width="9" height="8" viewBox="0 0 9 8"><path d="M0.3 0.5 H8.7 L4.5 7.5 Z" fill="#1a1a1a"/></svg>
<div class="t" style="left:1002px;top:324.3px;font-size:12.5px;line-height:15px;color:#2a2a2a;letter-spacing:0.05px">Properties</div>
<div class="a" style="left:974px;top:345px;width:237px;height:280px;background:#fff;border:1px solid #dcdcde;border-top:none;box-shadow:0 1px 1px #e4e4e6"></div>
<div class="t" style="left:981px;top:353px;font-size:10px;line-height:13px;font-weight:bold;color:#3a3a3a;letter-spacing:0.05px">Default</div>
<div class="t" style="left:981px;top:365.8px;font-size:10px;line-height:13px;font-weight:bold;color:#3a3a3a;letter-spacing:0.05px">Button</div>
<div class="t" style="left:981px;top:374.7px;font-size:10px;line-height:13px;font-weight:bold;color:#3a3a3a;letter-spacing:0.05px">Color:</div>
<div class="t" style="left:1053px;top:355px;font-size:14px;line-height:16px;color:#333">#</div>
<div class="a" style="left:1067px;top:353px;width:63px;height:22px;background:#fff;border:1px solid #dadada;border-radius:4px"></div>
<div class="t" style="left:1073px;top:357.5px;font-size:11.5px;line-height:13px;color:#222">4d4d4d</div>
<div class="a" style="left:1156px;top:351px;width:50px;height:23px;background:#fff;border:1px solid #dadada;border-radius:4px"></div>
<div class="a" style="left:1159px;top:356px;width:21px;height:13px;background:#4d4d4d"></div>
<svg class="a" style="left:1189px;top:359px" width="9" height="7" viewBox="0 0 9 7"><path d="M0 0 H9 L4.5 7 Z" fill="#c4c4c4"/></svg>
<div class="a" style="left:980px;top:392px;width:226px;height:1px;background:#ececee"></div>
<div class="t" style="left:981px;top:400.5px;font-size:10px;line-height:13px;font-weight:bold;color:#3a3a3a;letter-spacing:0.05px">Active Button</div>
<div class="t" style="left:981px;top:413.5px;font-size:10px;line-height:13px;font-weight:bold;color:#3a3a3a;letter-spacing:0.05px">Color:</div>
<div class="t" style="left:1053px;top:402px;font-size:14px;line-height:16px;color:#333">#</div>
<div class="a" style="left:1067px;top:401px;width:63px;height:22px;background:#fff;border:1px solid #dadada;border-radius:4px"></div>
<div class="t" style="left:1073px;top:405.5px;font-size:11.5px;line-height:13px;color:#222">005fbf</div>
<div class="a" style="left:1156px;top:398px;width:50px;height:23px;background:#fff;border:1px solid #dadada;border-radius:4px"></div>
<div class="a" style="left:1159px;top:403px;width:21px;height:13px;background:#005fbf"></div>
<svg class="a" style="left:1189px;top:406px" width="9" height="7" viewBox="0 0 9 7"><path d="M0 0 H9 L4.5 7 Z" fill="#c4c4c4"/></svg>
<div class="a" style="left:980px;top:432px;width:226px;height:1px;background:#ececee"></div>
<div class="t" style="left:981px;top:439.5px;font-size:10px;line-height:13px;font-weight:bold;color:#3a3a3a;letter-spacing:0.05px">Button size:</div>
<div class="a" style="left:1054px;top:446px;width:73px;height:4px;background:#dcdcdc;border-radius:2px"></div>
<div class="a" style="left:1054px;top:446px;width:27px;height:4px;background:#4fc0ea;border-radius:2px"></div>
<div class="a" style="left:1075px;top:442px;width:12px;height:12px;background:#fff;border:1px solid #d4d4d4;border-radius:50%;box-shadow:0 1px 1px #ddd"></div>
<div class="a" style="left:1156px;top:438px;width:50px;height:23px;background:#fff;border:1px solid #dadada;border-radius:4px"></div>
<div class="t" style="left:1162px;top:443px;font-size:11px;line-height:13px;color:#222">8</div>
<svg class="a" style="left:1189px;top:446px" width="9" height="7" viewBox="0 0 9 7"><path d="M0 0 H9 L4.5 7 Z" fill="#c4c4c4"/></svg>
<div class="a" style="left:980px;top:466px;width:226px;height:1px;background:#ececee"></div>
<div class="t" style="left:981px;top:474px;font-size:10px;line-height:13px;font-weight:bold;color:#3a3a3a;letter-spacing:0.05px">Button</div>
<div class="t" style="left:981px;top:487.5px;font-size:10px;line-height:13px;font-weight:bold;color:#3a3a3a;letter-spacing:0.05px">border</div>
<div class="t" style="left:981px;top:496.5px;font-size:10px;line-height:13px;font-weight:bold;color:#3a3a3a;letter-spacing:0.05px">radius:</div>
<div class="a" style="left:1054px;top:482px;width:73px;height:4px;background:#dcdcdc;border-radius:2px"></div>
<div class="a" style="left:1054px;top:482px;width:73px;height:4px;background:#4fc0ea;border-radius:2px"></div>
<div class="a" style="left:1121px;top:478px;width:12px;height:12px;background:#fff;border:1px solid #d4d4d4;border-radius:50%;box-shadow:0 1px 1px #ddd"></div>
<div class="a" style="left:1156px;top:473px;width:50px;height:23px;background:#fff;border:1px solid #dadada;border-radius:4px"></div>
<div class="t" style="left:1162px;top:478px;font-size:11px;line-height:13px;color:#222">10</div>
<svg class="a" style="left:1189px;top:481px" width="9" height="7" viewBox="0 0 9 7"><path d="M0 0 H9 L4.5 7 Z" fill="#c4c4c4"/></svg>
<div class="a" style="left:980px;top:514px;width:226px;height:1px;background:#ececee"></div>
<div class="t" style="left:981px;top:522px;font-size:10px;line-height:13px;font-weight:bold;color:#3a3a3a;letter-spacing:0.05px">Button</div>
<div class="t" style="left:981px;top:535px;font-size:10px;line-height:13px;font-weight:bold;color:#3a3a3a;letter-spacing:0.05px">spacing:</div>
<div class="a" style="left:1054px;top:529px;width:73px;height:4px;background:#dcdcdc;border-radius:2px"></div>
<div class="a" style="left:1054px;top:529px;width:15px;height:4px;background:#4fc0ea;border-radius:2px"></div>
<div class="a" style="left:1063px;top:525px;width:12px;height:12px;background:#fff;border:1px solid #d4d4d4;border-radius:50%;box-shadow:0 1px 1px #ddd"></div>
<div class="a" style="left:1156px;top:521px;width:50px;height:23px;background:#fff;border:1px solid #dadada;border-radius:4px"></div>
<div class="t" style="left:1162px;top:526px;font-size:11px;line-height:13px;color:#222">5</div>
<svg class="a" style="left:1189px;top:529px" width="9" height="7" viewBox="0 0 9 7"><path d="M0 0 H9 L4.5 7 Z" fill="#c4c4c4"/></svg>
<div class="a" style="left:980px;top:552px;width:226px;height:1px;background:#ececee"></div>
<div class="t" style="left:981px;top:561px;font-size:10px;line-height:13px;font-weight:bold;color:#3a3a3a;letter-spacing:0.05px">Vertical?</div>
<div class="a" style="left:1152px;top:559px;width:54px;height:21px;background:linear-gradient(#e4e4e4,#f0f0f0);border:1px solid #dcdcdc;border-radius:11px"></div>
<div class="a" style="left:1153px;top:560px;width:19px;height:19px;background:#fff;border:1px solid #d0d0d0;border-radius:50%;box-shadow:0 1px 1px #ccc"></div>
<div class="t" style="left:1174px;top:564px;font-size:11px;line-height:13px;font-weight:bold;color:#c4c4c4">OFF</div>
<div class="a" style="left:980px;top:586px;width:226px;height:1px;background:#ececee"></div>
<div class="t" style="left:981px;top:594px;font-size:10px;line-height:13px;font-weight:bold;color:#3a3a3a;letter-spacing:0.05px">Active</div>
<div class="t" style="left:981px;top:607px;font-size:10px;line-height:13px;font-weight:bold;color:#3a3a3a;letter-spacing:0.05px">button:</div>
<div class="a" style="left:1053px;top:593px;width:136px;height:23px;background:#fff;border:1px solid #dadada;border-radius:4px"></div>
<div class="t" style="left:1057px;top:598px;font-size:12px;line-height:14px;color:#222">None</div>
<svg class="a" style="left:1172px;top:601px" width="9" height="7" viewBox="0 0 9 7"><path d="M0 0 H9 L4.5 7 Z" fill="#c4c4c4"/></svg>
<div class="a" style="left:974px;top:631px;width:237px;height:30px;background:linear-gradient(#d9d8da,#d5d4d6 85%,#cdcccf);border-top:1px solid #d0d0d2"></div>
<svg class="a" style="left:985px;top:643px" width="9" height="8" viewBox="0 0 9 8"><path d="M0.3 0.5 H8.7 L4.5 7.5 Z" fill="#1a1a1a"/></svg>
<div class="t" style="left:1002px;top:640.3px;font-size:12.5px;line-height:15px;color:#2a2a2a;letter-spacing:0.05px">Buttons</div>
<div class="a" style="left:974px;top:661px;width:237px;height:32px;background:#fff;border:1px solid #dcdcde;border-top:none"></div>
<div class="a" style="left:975px;top:661px;width:235px;height:19px;background:#ececec"></div>
<div class="t" style="left:980px;top:665px;font-size:11px;line-height:13px;color:#222">Button 1</div>
<div class="t" style="left:981px;top:688px;font-size:10px;line-height:13px;font-weight:bold;color:#333">Actions:</div>
</div>

<div id="bottomp">
<div class="a" style="left:64px;top:693px;width:1152px;height:27px;background:linear-gradient(#dedde0,#d6d5d8 40%,#cbc9cc);border-top:1px solid #bdbdc1"></div>
<div class="a" style="left:64px;top:694px;width:1152px;height:1px;background:#ebebed"></div>
<div class="a" style="left:64px;top:694px;width:1px;height:23px;background:#f0f0f2"></div>
<div class="a" style="left:1215px;top:694px;width:1px;height:23px;background:#e8e8ea"></div>
<div class="a" style="left:64px;top:717px;width:3px;height:3px;background:#000"></div>
<div class="a" style="left:1214px;top:717px;width:2px;height:3px;background:#000"></div>
<div class="a" style="left:116px;top:697px;width:1px;height:21px;background:#c9c9cb"></div>
<div class="a" style="left:117px;top:697px;width:1px;height:21px;background:#e4e4e6"></div>
<svg class="a" style="left:81px;top:700px" width="20" height="15" viewBox="0 0 20 15"><path d="M4.5 13 Q0.5 13 0.8 9.5 Q1.2 6.5 4.3 6.6 Q5 1.5 9.8 1.3 Q14 1.3 15 5.5 Q19.3 5.6 19.2 9.5 Q19 13 15.5 13 Z" fill="#8e8e90"/><path d="M10 5 L13.5 9 H11.3 V13 H8.7 V9 H6.5 Z" fill="#ececec"/><rect x="3" y="13.6" width="14" height="1" fill="#efefef"/></svg>
<svg class="a" style="left:139px;top:700px" width="14" height="14" viewBox="0 0 14 14"><circle cx="6.5" cy="6.8" r="5.3" fill="none" stroke="#959597" stroke-width="1.8"/><path d="M4.8 3.8 L7.6 7.6" stroke="#959597" stroke-width="1.3"/></svg>
<div class="t" style="left:164px;top:700.7px;font-size:10px;line-height:13px;color:#4e4e50;letter-spacing:0.1px">Auto save in <b style="color:#1e1e1e;letter-spacing:-0.35px">30 seconds</b></div>
<div class="a" style="left:478px;top:698px;width:17px;height:16px;background:#ececee;border-radius:2px"></div>
<svg class="a" style="left:479px;top:699px" width="15" height="14" viewBox="0 0 15 14"><path d="M4 12 L7 7 L12 3 L10 8 Z" fill="#f8f8f8"/></svg>
<div class="t" style="left:500px;top:700px;font-size:10px;line-height:13px;color:#1e1e1e;font-weight:bold;letter-spacing:-0.1px">Snap container demo (carousel) &gt; Screens &gt; <span style="font-weight:normal;color:#707072;letter-spacing:0">Screen 1</span></div>
<div class="a" style="left:887px;top:697px;width:1px;height:21px;background:#c9c9cb"></div>
<div class="a" style="left:888px;top:697px;width:1px;height:21px;background:#e4e4e6"></div>
<div class="a" style="left:940px;top:697px;width:1px;height:21px;background:#c9c9cb"></div>
<div class="a" style="left:941px;top:697px;width:1px;height:21px;background:#e4e4e6"></div>
<div class="a" style="left:995px;top:697px;width:1px;height:21px;background:#c9c9cb"></div>
<div class="a" style="left:996px;top:697px;width:1px;height:21px;background:#e4e4e6"></div>
<div class="a" style="left:1051px;top:697px;width:1px;height:21px;background:#c9c9cb"></div>
<div class="a" style="left:1052px;top:697px;width:1px;height:21px;background:#e4e4e6"></div>
<div class="a" style="left:1106px;top:697px;width:1px;height:21px;background:#c9c9cb"></div>
<div class="a" style="left:1107px;top:697px;width:1px;height:21px;background:#e4e4e6"></div>
<div class="a" style="left:1162px;top:697px;width:1px;height:21px;background:#c9c9cb"></div>
<div class="a" style="left:1163px;top:697px;width:1px;height:21px;background:#e4e4e6"></div>
<svg class="a" style="left:852px;top:699px" width="15" height="15" viewBox="0 0 15 15"><circle cx="6" cy="6" r="4.6" fill="none" stroke="#959597" stroke-width="1.8"/><path d="M9.3 9.3 L13.8 13.8" stroke="#959597" stroke-width="2.2"/><path d="M6 3.8 V8.2 M3.8 6 H8.2" stroke="#959597" stroke-width="1.3"/></svg>
<svg class="a" style="left:907px;top:700px" width="16" height="16" viewBox="0 0 16 16"><rect x="0.5" y="0.5" width="3.6" height="3.6" fill="#959597"/><rect x="0.5" y="5.8" width="3.6" height="3.6" fill="#959597"/><rect x="0.5" y="11.1" width="3.6" height="3.6" fill="#959597"/><rect x="5.8" y="0.5" width="3.6" height="3.6" fill="#959597"/><rect x="5.8" y="5.8" width="3.6" height="3.6" fill="#959597"/><rect x="5.8" y="11.1" width="3.6" height="3.6" fill="#959597"/><rect x="11.1" y="0.5" width="3.6" height="3.6" fill="#959597"/><rect x="11.1" y="5.8" width="3.6" height="3.6" fill="#959597"/><rect x="11.1" y="11.1" width="3.6" height="3.6" fill="#959597"/></svg>
<svg class="a" style="left:963px;top:699px" width="13" height="14" viewBox="0 0 13 14"><path d="M6 0.5 H12.5 L8 6 H11.5 L2 13.8 L5.5 7.5 H1.5 Z" fill="#9a9a9c"/></svg>
<svg class="a" style="left:1016px;top:699px" width="16" height="15" viewBox="0 0 16 15"><path d="M7.2 2.5 H8.8 V6.7 H13 V8.3 H8.8 V12.5 H7.2 V8.3 H3 V6.7 H7.2 Z" fill="#959597"/><path d="M8 0.2 L10.2 2.8 H5.8 Z M8 14.8 L10.2 12.2 H5.8 Z M0.2 7.5 L2.8 5.3 V9.7 Z M15.8 7.5 L13.2 5.3 V9.7 Z" fill="#959597"/></svg>
<svg class="a" style="left:1071px;top:700px" width="17" height="14" viewBox="0 0 17 14"><path d="M12 4 A5.2 5.2 0 1 0 12.3 9" fill="none" stroke="#959597" stroke-width="2"/><path d="M9.5 6 L16.5 6 L14 1.5 Z" fill="#959597" transform="rotate(25 13 5)"/></svg>
<div class="t" style="left:1128px;top:698.5px;font-size:16px;line-height:17px;font-weight:bold;color:#9a9a9c">?</div>
<svg class="a" style="left:1180px;top:699px" width="20" height="15" viewBox="0 0 20 15"><g stroke="#959597" stroke-width="1.8" fill="none"><path d="M1 1 L7 6"/><path d="M19 1 L13 6"/><path d="M1 14 L7 9"/><path d="M19 14 L13 9"/></g><g fill="#959597"><path d="M8.5 7 V2 L3.5 7 Z"/><path d="M11.5 7 V2 L16.5 7 Z"/><path d="M8.5 8 V13 L3.5 8 Z"/><path d="M11.5 8 V13 L16.5 8 Z"/></g></svg>
</div>

</body></html>
